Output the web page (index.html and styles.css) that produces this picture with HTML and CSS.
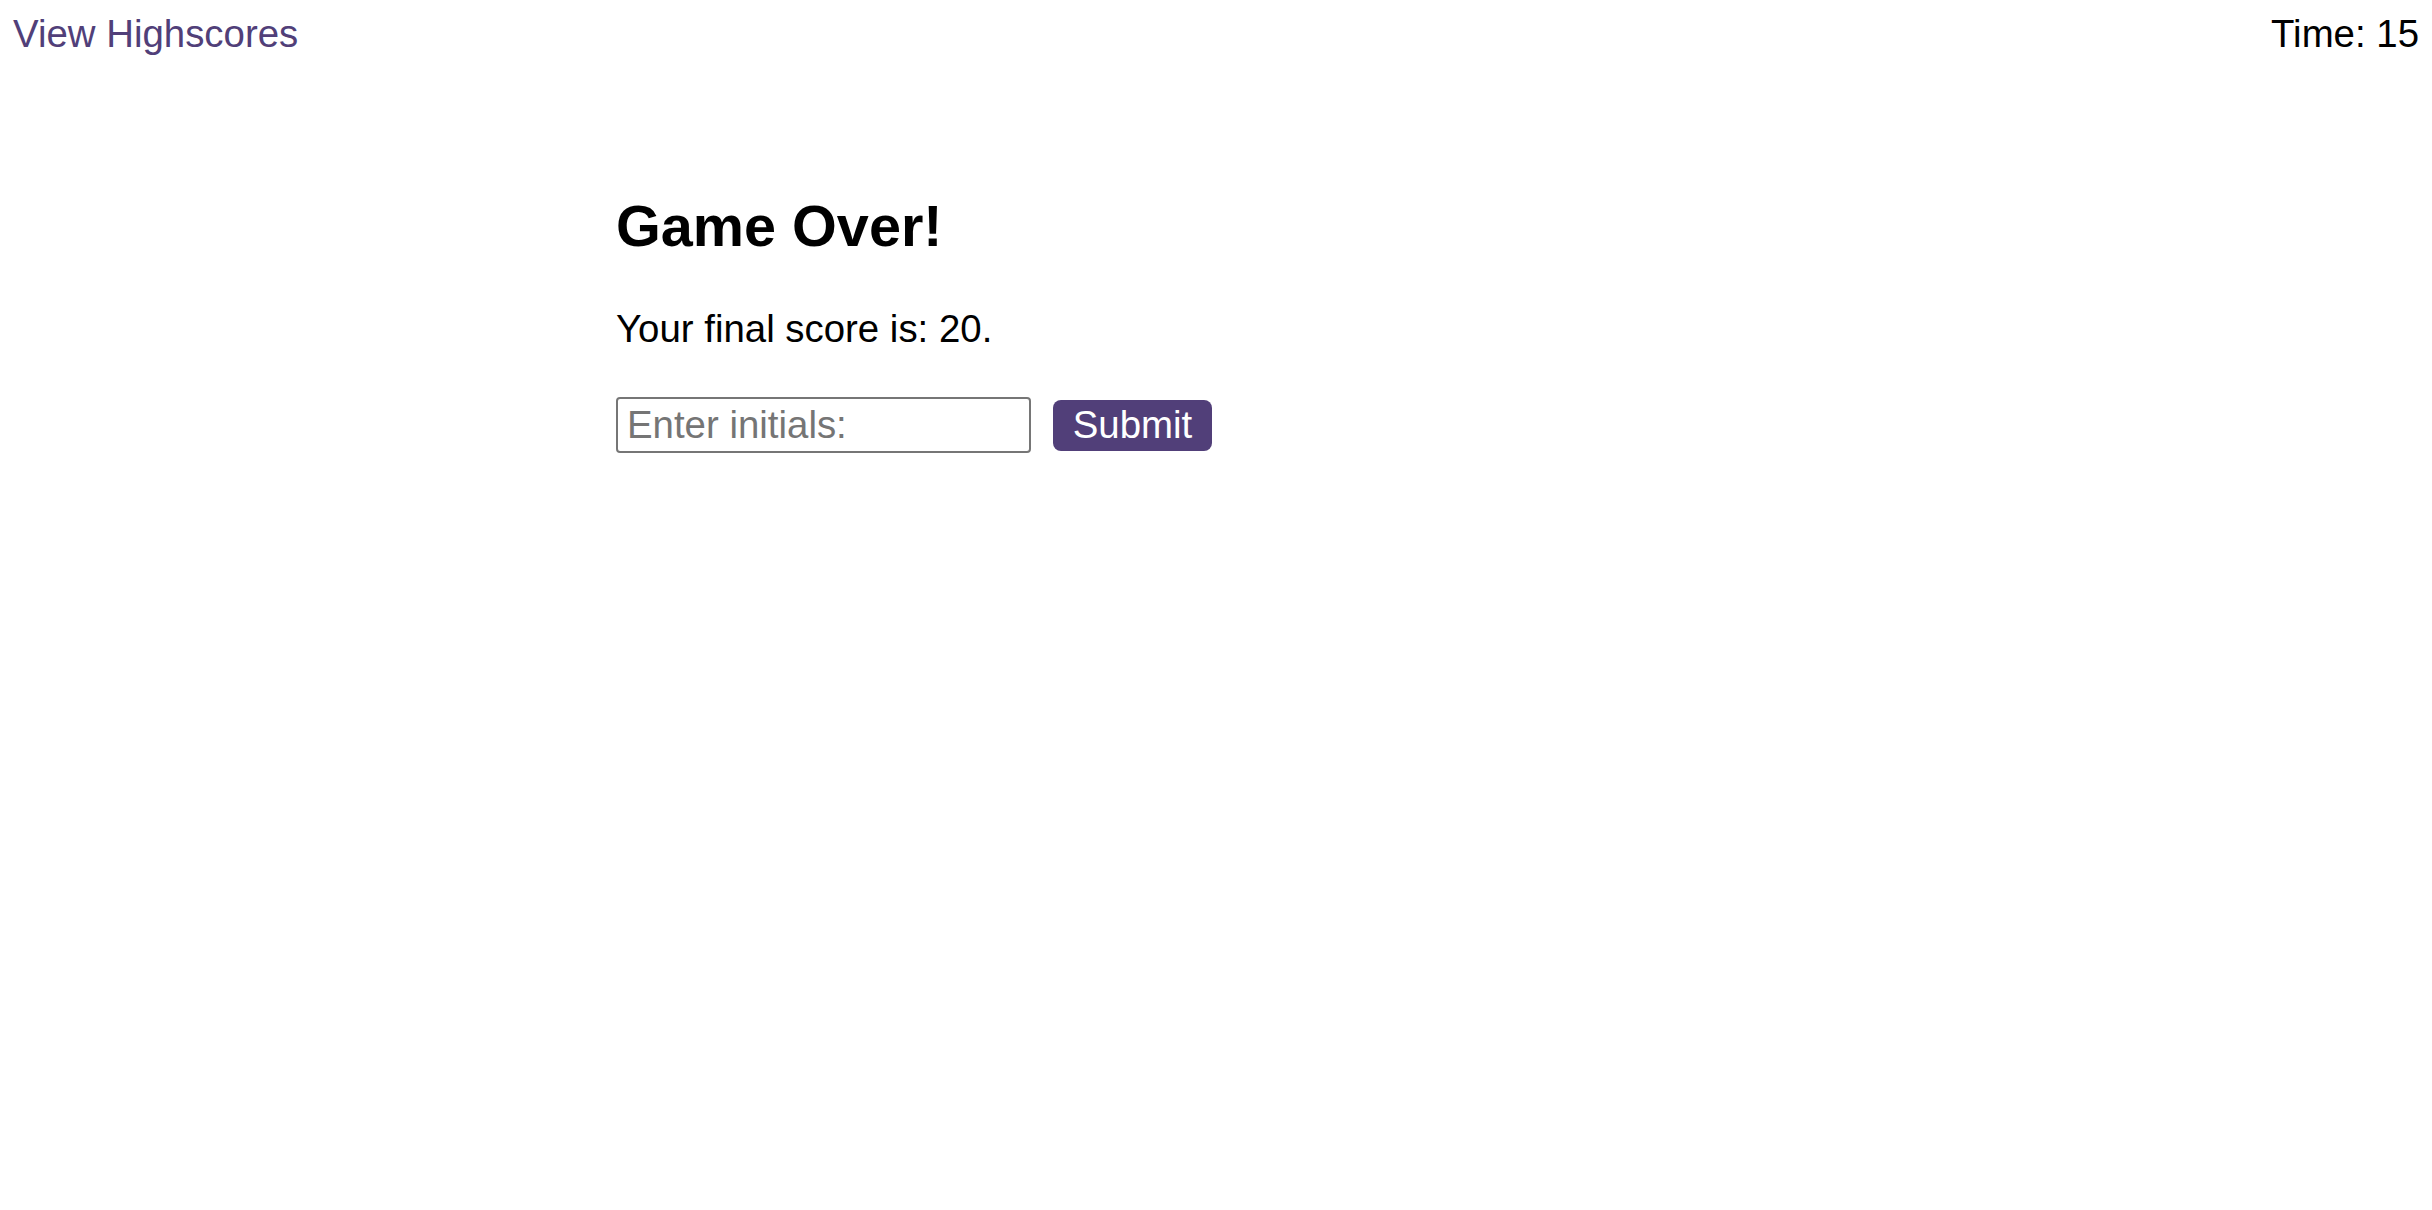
FILE: index.html
```html
<!DOCTYPE html>
<html lang="en">
<head>
<meta charset="utf-8">
<title>Code Quiz</title>
<link rel="stylesheet" href="styles.css">
</head>
<body>
<header class="topbar">
  <a class="highscores-link" href="#">View Highscores</a>
  <div class="timer">Time: 15</div>
</header>
<main class="container">
  <h1 class="title">Game Over!</h1>
  <p class="score">Your final score is: 20.</p>
  <form class="initials-form">
    <input class="initials-input" type="text" placeholder="Enter initials:">
    <button class="submit-btn" type="button">Submit</button>
  </form>
</main>
</body>
</html>
```

FILE: styles.css
```css
html, body {
  margin: 0;
  padding: 0;
  background: #ffffff;
}

body {
  font-family: "Liberation Sans", Arial, sans-serif;
  color: #000000;
}

.topbar {
  display: flex;
  justify-content: space-between;
  align-items: flex-start;
  padding: 12px 13px 0 13px;
  font-size: 38.4px;
  line-height: normal;
}

.highscores-link {
  color: #513f79;
  text-decoration: none;
}

.timer {
  color: #000000;
}

.container {
  max-width: 1200px;
  margin: 137px auto 0;
}

.title {
  font-size: 57.6px;
  font-weight: bold;
  line-height: normal;
  margin: 0 0 48px;
}

.score {
  font-size: 38.4px;
  line-height: normal;
  margin: 0 0 46px;
}

.initials-form {
  display: flex;
  align-items: center;
  gap: 22px;
}

.initials-input {
  box-sizing: border-box;
  width: 415px;
  height: 56px;
  margin: 0;
  padding: 0 9px;
  border: 2px solid #767676;
  border-radius: 4px;
  font-family: "Liberation Sans", Arial, sans-serif;
  font-size: 38.4px;
  color: #000000;
  background: #ffffff;
}

.initials-input::placeholder {
  color: #757575;
}

.submit-btn {
  box-sizing: border-box;
  height: 51px;
  width: 159px;
  margin: 0;
  padding: 0;
  border: none;
  border-radius: 8px;
  background: #513f79;
  color: #ffffff;
  font-family: "Liberation Sans", Arial, sans-serif;
  font-size: 38.4px;
  line-height: 1;
  cursor: pointer;
}
```
